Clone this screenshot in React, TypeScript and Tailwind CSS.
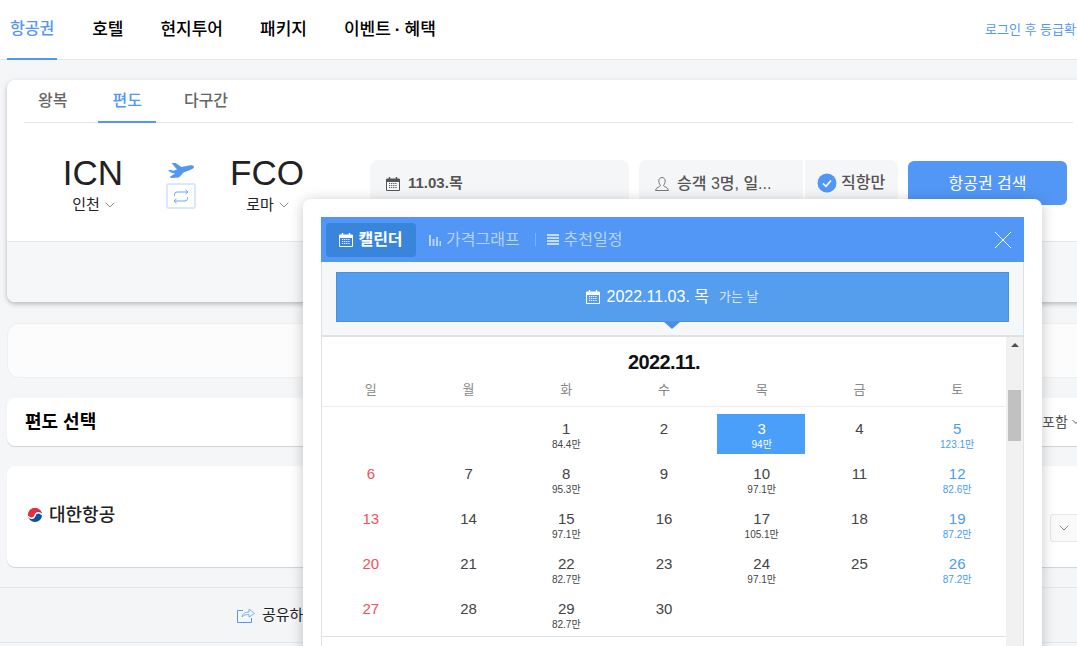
import { ChevronDown } from "lucide-react";

const FONT = "font-['Liberation_Sans','Noto_Sans_CJK_KR',sans-serif]";

type Day = { d?: number; price?: string; kind?: "sun" | "sat" | "sel" };

const DAYS: Day[] = [
  {}, {},
  { d: 1, price: "84.4만" }, { d: 2 }, { d: 3, price: "94만", kind: "sel" }, { d: 4 }, { d: 5, price: "123.1만", kind: "sat" },
  { d: 6, kind: "sun" }, { d: 7 }, { d: 8, price: "95.3만" }, { d: 9 }, { d: 10, price: "97.1만" }, { d: 11 }, { d: 12, price: "82.6만", kind: "sat" },
  { d: 13, kind: "sun" }, { d: 14 }, { d: 15, price: "97.1만" }, { d: 16 }, { d: 17, price: "105.1만" }, { d: 18 }, { d: 19, price: "87.2만", kind: "sat" },
  { d: 20, kind: "sun" }, { d: 21 }, { d: 22, price: "82.7만" }, { d: 23 }, { d: 24, price: "97.1만" }, { d: 25 }, { d: 26, price: "87.2만", kind: "sat" },
  { d: 27, kind: "sun" }, { d: 28 }, { d: 29, price: "82.7만" }, { d: 30 },
];

function CalendarIcon({ className }: { className?: string }) {
  return (
    <svg className={className} viewBox="0 0 14 14" fill="none" stroke="currentColor">
      <path d="M.5 2.5h13v11H.5z" />
      <path d="M.5 2h13v2.5H.5z" fill="currentColor" />
      <path d="M3.5 0v2M10.5 0v2" strokeWidth={1.4} />
      <path d="M3 6.5h8M3 8.5h8M3 10.5h8" strokeDasharray="1.2 .9" />
    </svg>
  );
}

function CalendarCell({ day }: { day: Day }) {
  const sel = day.kind === "sel";
  const color = sel ? "text-white" : day.kind === "sun" ? "text-[#f0505f]" : day.kind === "sat" ? "text-[#4a9bf5]" : "text-[#444444]";
  return (
    <div className={`h-10 flex flex-col items-center pt-[5px] ${sel ? "ml-[4px] mr-[6px] pl-[2px] bg-[#4a9ffb]" : "mx-[5px]"} ${color}`}>
      <span className="text-[15px] leading-5">{day.d}</span>
      {day.price && <span className="text-[10px] leading-3">{day.price}</span>}
    </div>
  );
}

function CalendarModal() {
  return (
    <div className="absolute left-[303px] top-[199px] w-[739px] h-[470px] bg-white rounded-lg p-[18px] shadow-[0_2px_14px_rgba(0,0,0,0.22)]">
      <div className="flex h-[45px] items-center bg-[#5297f6] pl-[5px] pr-[12px]">
        <div className="flex h-[34px] w-[90px] items-center justify-center gap-[5px] rounded-sm bg-[#3a85dc] text-base font-bold text-white">
          <CalendarIcon className="h-[14px] w-[14px]" />
          캘린더
        </div>
        <svg className="ml-[13px] h-3 w-3 text-[#b9d4fb]" viewBox="0 0 12 12" fill="currentColor">
          <path d="M0 1h2v11H0zM3.5 5h2v7h-2zM7 3h2v9H7zM10.5 7H12v5h-1.5z" />
        </svg>
        <span className="ml-[5px] text-base text-[#b9d4fb]">가격그래프</span>
        <div className="ml-[15px] h-[13px] w-px bg-[#7fb2f8]" />
        <svg className="ml-[11px] h-[11px] w-3 text-[#c5dbfb]" viewBox="0 0 12 11" fill="currentColor">
          <path d="M0 0h12v2H0zM0 3h12v2H0zM0 6h12v2H0zM0 9h12v2H0z" />
        </svg>
        <span className="ml-[5px] text-base text-[#b9d4fb]">추천일정</span>
        <svg className="ml-auto h-[18px] w-[18px] text-white" viewBox="0 0 18 18" stroke="currentColor" fill="none">
          <path d="M1 1l16 16M17 1L1 17" />
        </svg>
      </div>
      <div className="border-x border-[#dfe1e5]">
        <div className="relative h-[75px] border-b-2 border-[#dfe1e5] bg-[#f6f7f9] pl-[14px] pr-[14px] pt-[10px]">
          <div className="flex h-[50px] items-center justify-center border border-[#4a90e2] bg-[#559eee] text-white">
            <CalendarIcon className="h-[14px] w-[14px]" />
            <span className="ml-[6px] text-base">2022.11.03. 목</span>
            <span className="ml-[10px] text-[13px] text-[#d8e8fb]">가는 날</span>
          </div>
          <div className="absolute left-[342px] top-[60px] h-0 w-0 border-x-[8px] border-t-[7px] border-x-transparent border-t-[#4a90e2]" />
        </div>
        <div className="flex h-[320px]">
          <div className="w-[684px]">
            <div className="pt-[13px] text-center text-xl leading-6 font-bold tracking-[-0.6px] text-[#111111]">2022.11.</div>
            <div className="mt-[7px] grid grid-cols-7 border-b border-[#eeeeee] pb-[7px] text-center text-[13px] leading-[18px] text-[#888888]">
              {["일", "월", "화", "수", "목", "금", "토"].map((w) => (
                <span key={w}>{w}</span>
              ))}
            </div>
            <div className="grid grid-cols-7 gap-y-[5px] border-b border-[#dfe1e5] pb-[2px] pt-[7px]">
              {DAYS.map((day, i) => (
                <CalendarCell key={i} day={day} />
              ))}
            </div>
          </div>
          <div className="flex w-[17px] flex-col items-center bg-[#f1f1f1] pt-[6px]">
            <div className="h-0 w-0 border-x-[4px] border-b-[4px] border-x-transparent border-b-[#505050]" />
            <div className="mt-[43px] h-[51px] w-[13px] bg-[#c1c1c1]" />
          </div>
        </div>
      </div>
    </div>
  );
}

export default function App() {
  return (
    <div className={`relative h-[646px] w-[1077px] overflow-hidden bg-[#f4f6f8] ${FONT}`}>
      {/* Top nav */}
      <header className="flex h-[60px] border-b border-[#e4e6e9] bg-white pl-[7px]">
        <nav className="flex flex-1 gap-[31px] text-[17px] font-medium text-black">
          <a className="flex h-[60px] items-center border-b-2 border-[#5297f6] px-[3px] text-base text-[#5297f6]">항공권</a>
          <a className="ml-px flex h-[60px] items-center px-[3px]">호텔</a>
          <a className="flex h-[60px] items-center px-[3px]">현지투어</a>
          <a className="flex h-[60px] items-center px-[3px]">패키지</a>
          <a className="flex h-[60px] items-center px-[3px]">이벤트 <b className="mx-1">·</b> 혜택</a>
        </nav>
        <div className="flex w-[92px] shrink-0 items-center whitespace-nowrap text-[13px] text-[#5297f6]">로그인 후 등급확인</div>
      </header>

      <main className="ml-[7px] w-[1083px]">
        {/* Search card */}
        <section className="mt-5 h-[222px] rounded-lg bg-white shadow-[0_2px_5px_rgba(0,0,0,0.25)]">
          <div className="mx-[17px] flex h-[43px] border-b border-[#e4e6e9] text-base font-medium text-[#666666]">
            <a className="flex items-center px-[14px]">왕복</a>
            <a className="-mb-px ml-[17px] flex items-center border-b-2 border-[#5297f6] px-[14px] text-[#5297f6]">편도</a>
            <a className="ml-[14px] flex items-center px-[14px]">다구간</a>
          </div>
          <div className="flex h-[118px] items-start px-[17px] pt-[30px]">
            <div className="flex w-[138px] flex-col items-center">
              <div className="text-[35px] leading-10 text-[#222222]">ICN</div>
              <div className="mt-[2px] flex items-center gap-[2px] pl-[4px] text-[15px] leading-5 text-[#222222]">
                인천 <ChevronDown className="h-4 w-4 text-[#777777]" strokeWidth={1.25} />
              </div>
            </div>
            <div className="ml-[4px] flex w-[30px] flex-col items-center pt-[10px]">
              <svg className="h-[15px] w-[26px] text-[#5297f6]" viewBox="0 0 26 15" fill="currentColor">
                <path d="M3.500 0H7.500L13.500 4 21 2.500C24 2 26 2.800 26 4S24.500 6 22 7L15.500 9.500 11 14.500 3.500 15 1.500 14 7 10.500 3.500 9.800 0 7.500 1.800 6.800 5.500 7.800 9 6.500z" />
              </svg>
              <div className="mt-[5px] flex h-[26px] w-[30px] items-center justify-center rounded-[3px] border-2 border-[#d9e8fc]">
                <svg className="h-[15px] w-[16px] text-[#6fa9f7]" viewBox="0 0 16 15" fill="none" stroke="currentColor">
                  <path d="M1.500 7V5.500A2.500 2.500 0 0 1 4 3H15M12.500 .8 15 3l-2.500 2.200M14.500 8V9.500A2.500 2.500 0 0 1 12 12H1M3.500 9.800 1 12l2.500 2.200" />
                </svg>
              </div>
            </div>
            <div className="ml-[4px] flex w-[134px] flex-col items-center">
              <div className="text-[35px] leading-10 text-[#222222]">FCO</div>
              <div className="mt-[2px] flex items-center gap-[2px] pl-[4px] text-[15px] leading-5 text-[#222222]">
                로마 <ChevronDown className="h-4 w-4 text-[#777777]" strokeWidth={1.25} />
              </div>
            </div>
            <div className="ml-[36px] mt-[7px] flex h-[45px] w-[259px] items-center gap-2 rounded-lg bg-[#f5f6f8] pl-4 pt-[2px] text-[15px] font-bold text-[#555555]">
              <CalendarIcon className="h-[14px] w-[14px]" />
              11.03.목
            </div>
            <div className="ml-[10px] mt-[7px] flex h-[45px] w-[164px] items-center gap-2 rounded-l-lg bg-[#f5f6f8] pl-4 pt-[2px] text-base font-medium text-[#555555]">
              <svg className="h-[14px] w-[14px] text-[#777777]" viewBox="0 0 14 14" fill="none" stroke="currentColor">
                <path d="M7 .5c2 0 3.200 1.500 3.200 3.600S8.800 8 8.500 8.700c0 1 4.800 1.500 5 4.800H.5c.2-3.300 5-3.800 5-4.800C5.200 8 3.800 6.200 3.800 4.100S5 .5 7 .5z" />
              </svg>
              <span className="whitespace-nowrap">승객 3명, 일...</span>
            </div>
            <div className="ml-[2px] mt-[7px] flex h-[45px] w-[93px] items-center gap-1 rounded-r-lg bg-[#f5f6f8] pl-3 text-base font-medium text-[#555555]">
              <svg className="h-5 w-5 shrink-0" viewBox="0 0 20 20">
                <circle cx="10" cy="10" r="9.500" fill="#5297f6" />
                <path d="M6 10.500l3 2.800 5-5.800" fill="none" stroke="#ffffff" strokeWidth={1.6} />
              </svg>
              직항만
            </div>
            <div className="ml-[10px] mt-[8px] flex h-[44px] w-[159px] items-center justify-center rounded-md bg-[#5297f6] pt-[2px] text-base text-white">항공권 검색</div>
          </div>
          <div className="h-[61px] rounded-b-lg border-t border-[#e4e6e9] bg-[#f6f7f9]" />
        </section>

        <div className="mt-[21px] h-[55px] rounded-xl border border-[#eeeff1] bg-[#fcfcfd]" />

        <section className="mt-5 flex h-12 items-center rounded-lg bg-white pl-[18px] shadow-[0_1px_1px_rgba(0,0,0,0.15)]">
          <h2 className="flex-1 text-lg font-bold text-black">편도 선택</h2>
          <div className="flex w-[48px] items-center gap-[2px] whitespace-nowrap text-sm text-[#555555]">
            포함 <ChevronDown className="h-3 w-3 shrink-0" />
          </div>
        </section>

        <section className="mt-5 flex h-[101px] items-center rounded-lg bg-white pl-[21px] shadow-[0_1px_1px_rgba(0,0,0,0.15)]">
          <svg className="h-[14px] w-[14px] -translate-y-[2px]" viewBox="0 0 14 14">
            <circle cx="7" cy="7" r="7" fill="#0b4f9e" />
            <path d="M0 7A7 7 0 0 1 14 7 3.500 3.500 0 0 0 7 7 3.500 3.500 0 0 1 0 7z" fill="#ee2a3d" />
            <path d="M.3 8A3.500 3.500 0 0 0 7 7.500 3.500 3.500 0 0 1 13.700 7" fill="none" stroke="#ffffff" strokeWidth={1.3} />
          </svg>
          <span className="ml-[7px] flex-1 -translate-y-[2px] text-lg font-medium text-[#222222]">대한항공</span>
          <div className="mr-[10px] mt-[22px] flex h-7 w-[30px] items-center justify-center rounded-[3px] border border-[#e5e7eb] bg-[#fafafb] pr-[2px]">
            <ChevronDown className="h-4 w-4 text-[#888888]" strokeWidth={1.5} />
          </div>
        </section>
      </main>

      <div className="mt-5 flex h-14 items-center border-y border-[#e4e6e9] bg-[#f3f5f7] pl-[237px]">
        <svg className="h-4 w-[18px] text-[#5297f6]" viewBox="0 0 18 16" fill="none" stroke="currentColor">
          <path d="M6 3.500H.5v12h14V11" />
          <path d="M5 10c.5-3.500 3-5 7-5V2l5.500 4.500L12 10V7.500c-3 0-5.500.5-7 2.500z" strokeOpacity={0.7} />
        </svg>
        <span className="ml-[7px] text-[15px] text-[#222222]">공유하기</span>
      </div>

      <CalendarModal />
    </div>
  );
}
